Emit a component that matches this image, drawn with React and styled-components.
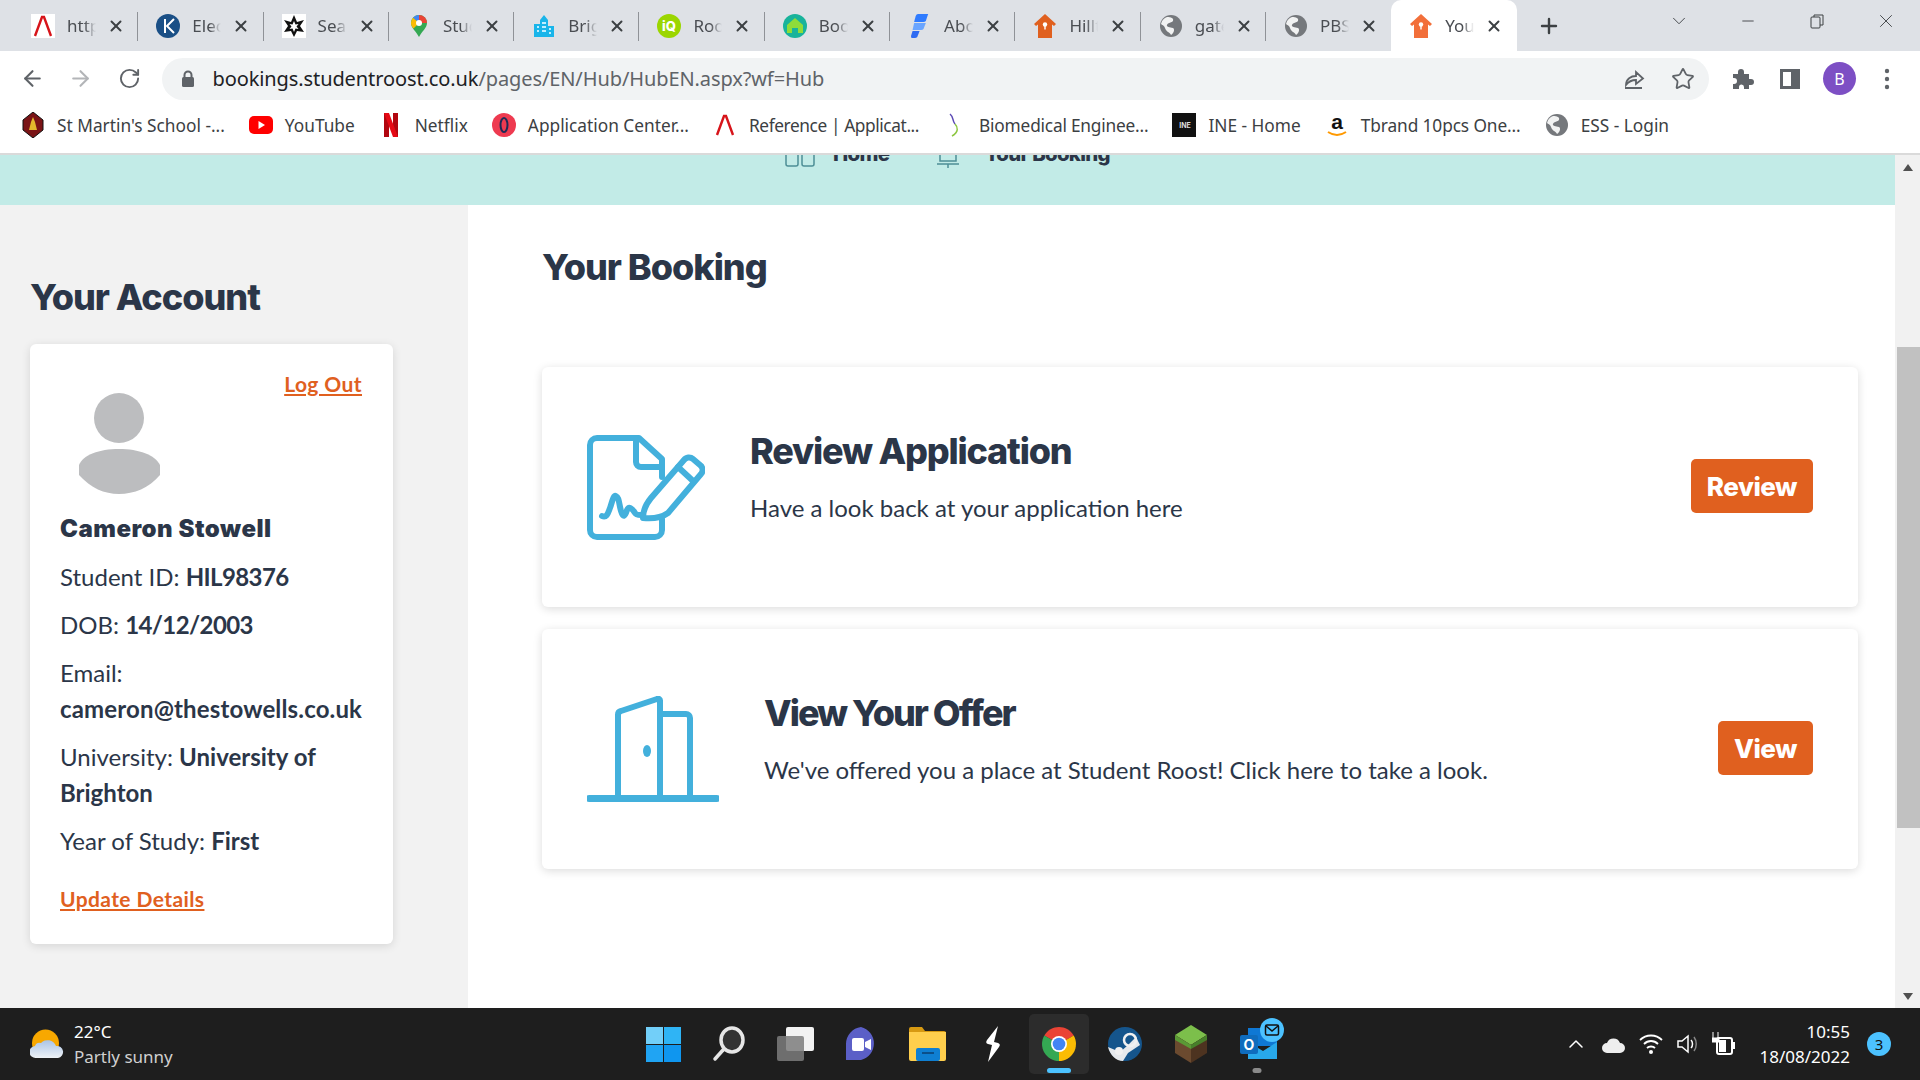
import React from "react";
import styled, { createGlobalStyle } from "styled-components";
import { ArrowLeft, ArrowRight, RotateCw, Star, X, Plus, ChevronDown, Minus, ChevronUp } from "lucide-react";

const GlobalStyle = createGlobalStyle`
  html, body { margin: 0; padding: 0; }
  body { width: 1920px; height: 1080px; overflow: hidden; background: #fff; }
  * { box-sizing: border-box; }
`;

const DARK = "#2b3648";
const ORANGE = "#e0601f";
const BLUE = "#43b0dc";
const UI_FONT = `"Noto Sans", "Open Sans", sans-serif`;
const HEAD_FONT = `Inter, "Liberation Sans", sans-serif`;
const BODY_FONT = `Lato, "Open Sans", sans-serif`;

const Shell = styled.div`
  width: 1920px;
  height: 1080px;
  display: flex;
  flex-direction: column;
  overflow: hidden;
`;

/* ---- tabs ---- */
const TabStrip = styled.div`
  height: 51px;
  background: #dee1e6;
  display: flex;
  align-items: stretch;
  padding-left: 13px;
  flex: none;
`;

const Tab = styled.div`
  width: 125.3px;
  flex: none;
  display: flex;
  align-items: center;
  padding-left: 18px;
  gap: 12px;
  position: relative;
  color: #45494f;
  background: ${(p) => (p.$active ? "#fff" : "transparent")};
  border-radius: ${(p) => (p.$active ? "10px 10px 0 0" : "0")};
  &::after {
    content: "";
    display: ${(p) => (p.$divider ? "block" : "none")};
    position: absolute;
    right: 0;
    top: 12px;
    bottom: 10px;
    width: 1px;
    background: #8f9297;
  }
`;

const TabLabel = styled.span`
  width: 29px;
  overflow: hidden;
  white-space: nowrap;
  font: 400 17px ${UI_FONT};
  color: #4a4d52;
  -webkit-mask-image: linear-gradient(90deg, #000 60%, transparent);
  mask-image: linear-gradient(90deg, #000 60%, transparent);
`;

const TabClose = styled.span`
  display: flex;
  margin-left: -1px;
  color: #3c4043;
`;

const NewTab = styled.div`
  width: 64px;
  display: flex;
  align-items: center;
  justify-content: center;
  color: #3c4043;
`;

const WindowButtons = styled.div`
  margin-left: auto;
  display: flex;
  align-items: flex-start;
  color: #3c4043;
`;

const WindowButton = styled.div`
  width: 69px;
  height: 42px;
  display: flex;
  align-items: center;
  justify-content: center;
`;

/* ---- toolbar ---- */
const Toolbar = styled.div`
  height: 49px;
  flex: none;
  display: flex;
  align-items: center;
  background: #fff;
  padding-top: 6px;
  padding-left: 8px;
  color: #5f6368;
`;

const NavIcon = styled.div`
  width: 48.5px;
  display: flex;
  justify-content: center;
  color: ${(p) => (p.$off ? "#b3b5b8" : "#5f6368")};
`;

const Omnibox = styled.div`
  width: 1547px;
  height: 42px;
  margin-left: 8px;
  border-radius: 21px;
  background: #f1f3f4;
  display: flex;
  align-items: center;
  padding: 0 14px 0 19px;
  font: 400 20px ${UI_FONT};
`;

const Url = styled.div`
  margin-left: 18px;
  color: #5f6368;
  white-space: nowrap;
  letter-spacing: -0.1px;
  span { color: #202124; }
`;

const OmniActions = styled.div`
  margin-left: auto;
  display: flex;
  gap: 25px;
  align-items: center;
`;

const ToolActions = styled.div`
  display: flex;
  align-items: center;
  gap: 25px;
  margin-left: 21px;
`;

const Avatar = styled.div`
  width: 33px;
  height: 33px;
  border-radius: 50%;
  background: #7d4fc4;
  color: #fff;
  font: 400 16px ${UI_FONT};
  display: flex;
  align-items: center;
  justify-content: center;
  margin: 0 2.5px 0 -2.5px;
`;

/* ---- bookmarks ---- */
const Bookmarks = styled.div`
  height: 55px;
  flex: none;
  display: flex;
  align-items: center;
  padding: 0 0 3px 21px;
  gap: 24px;
  background: #fff;
  border-bottom: 2px solid #dadada;
`;

const Bookmark = styled.div`
  display: flex;
  align-items: center;
  gap: 12px;
  font: 400 17.3px ${UI_FONT};
  letter-spacing: ${(p) => p.$spacing || 0}px;
  color: #3c4043;
  white-space: nowrap;
`;

/* ---- page ---- */
const Viewport = styled.div`
  flex: 1;
  min-height: 0;
  display: flex;
`;

const Page = styled.div`
  flex: 1;
  display: flex;
  flex-direction: column;
  background: #fff;
`;

const NavBand = styled.div`
  height: 50px;
  flex: none;
  background: #c2ebe7;
  overflow: hidden;
  display: flex;
  align-items: flex-start;
  padding-left: 785px;
  color: ${DARK};
`;

const NavItem = styled.div`
  display: flex;
  align-items: flex-start;
  gap: ${(p) => p.$iconGap}px;
  margin-right: 48px;
  white-space: nowrap;
  svg { flex: none; }
`;

const NavText = styled.span`
  margin-top: -11px;
  font: 800 20.4px/20px ${HEAD_FONT};
  letter-spacing: -0.7px;
`;

const Columns = styled.div`
  flex: 1;
  display: flex;
  min-height: 0;
`;

const Sidebar = styled.aside`
  width: 468px;
  flex: none;
  background: #f2f2f2;
  padding: 70px 0 0 30px;
`;

const SectionTitle = styled.h2`
  margin: 0;
  font: 800 36px/44px ${HEAD_FONT};
  letter-spacing: -1px;
  color: ${DARK};
`;

const AccountCard = styled.div`
  width: 363px;
  height: 600px;
  margin-top: 25px;
  background: #fff;
  border-radius: 6px;
  box-shadow: 0 2px 10px rgba(0, 0, 0, 0.12);
  padding: 28px 31px 0 30px;
`;

const CardHead = styled.div`
  height: 121px;
  display: flex;
  justify-content: space-between;
  padding-left: 19px;
`;

const OrangeLink = styled.a`
  font: 700 21px/24px ${BODY_FONT};
  letter-spacing: 0.4px;
  color: ${ORANGE};
  text-decoration: underline;
`;

const Name = styled.div`
  margin: 18px 0 12px;
  font: 900 24px/36px ${HEAD_FONT};
  letter-spacing: 0.5px;
  color: ${DARK};
`;

const Info = styled.p`
  margin: 0 0 12px;
  font: 400 24px/36px ${BODY_FONT};
  color: ${DARK};
`;

const Value = styled.b`
  font-weight: 700;
  letter-spacing: ${(p) => p.$spacing || 0}px;
`;

const UpdateRow = styled.div`
  margin-top: 28px;
`;

const Main = styled.main`
  flex: 1;
  padding: 40px 37px 0 74px;
`;

const ActionCard = styled.section`
  height: 240px;
  margin-top: ${(p) => p.$top}px;
  background: #fff;
  border-radius: 6px;
  box-shadow: 0 2px 10px rgba(0, 0, 0, 0.14);
  display: flex;
  align-items: center;
  padding: 0 45px;
`;

const CardText = styled.div`
  margin: 0 0 19px 45px;
`;

const CardTitle = styled.h3`
  margin: 0 0 17px;
  font: 800 36px/44px ${HEAD_FONT};
  letter-spacing: ${(p) => (p.$tight ? "-2px" : "-1.2px")};
  color: ${DARK};
`;

const CardCopy = styled.p`
  margin: 0;
  font: 400 24px/36px ${BODY_FONT};
  color: ${DARK};
`;

const ActionButton = styled.button`
  margin: 0 0 2px auto;
  height: 54px;
  padding: 0 16px;
  border: 0;
  border-radius: 5px;
  background: ${ORANGE};
  color: #fff;
  font: 800 26px ${HEAD_FONT};
  letter-spacing: -0.5px;
`;

const ScrollTrack = styled.div`
  width: 25px;
  flex: none;
  background: #f1f1f1;
  display: flex;
  flex-direction: column;
  align-items: center;
  justify-content: space-between;
  padding: 9px 0 8px;
  position: relative;
`;

const ScrollThumb = styled.div`
  position: absolute;
  left: 2px;
  right: 0;
  top: 192px;
  height: 481px;
  background: #c1c1c1;
`;

const ScrollArrow = styled.div`
  width: 0;
  height: 0;
  border-left: 5px solid transparent;
  border-right: 5px solid transparent;
  ${(p) => (p.$up ? "border-bottom: 7px solid #505050;" : "border-top: 7px solid #505050;")}
`;

/* ---- taskbar ---- */
const Taskbar = styled.footer`
  height: 72px;
  flex: none;
  background: #1e1e1e;
  display: flex;
  align-items: center;
  color: #fff;
  font: 400 17px ${UI_FONT};
  padding-left: 30px;
`;

const Weather = styled.div`
  width: 600px;
  display: flex;
  align-items: center;
  gap: 10px;
`;

const WeatherText = styled.div`
  line-height: 25px;
  div + div { color: #d0d0d0; }
`;

const TaskIcons = styled.div`
  display: flex;
  align-items: center;
`;

const TaskIcon = styled.div`
  width: 60px;
  height: 60px;
  margin: 0 3px;
  display: flex;
  align-items: center;
  justify-content: center;
  position: relative;
  border-radius: 5px;
  background: ${(p) => (p.$active ? "#2c2c2c" : "transparent")};
  &::after {
    content: "";
    display: ${(p) => (p.$indicator ? "block" : "none")};
    position: absolute;
    bottom: 1px;
    left: 50%;
    transform: translateX(-50%);
    width: ${(p) => (p.$indicator === "bar" ? "24px" : "9px")};
    height: 5px;
    border-radius: 3px;
    background: ${(p) => (p.$indicator === "bar" ? "#4cc2ff" : "#8a8a8a")};
  }
`;

const Tray = styled.div`
  margin-left: auto;
  display: flex;
  align-items: center;
  padding-right: 29px;
`;

const TrayIcons = styled.div`
  display: flex;
  align-items: center;
  gap: 12px;
`;

const Clock = styled.div`
  margin-left: 24px;
  text-align: right;
  line-height: 25px;
  font-size: 17px;
`;

const Badge = styled.div`
  width: 24px;
  height: 24px;
  margin-left: 17px;
  border-radius: 50%;
  background: #4cc2ff;
  color: #111;
  font-size: 15px;
  display: flex;
  align-items: center;
  justify-content: center;
`;

/* ---- favicons ---- */
const Chevron = () => (
  <svg width="24" height="24" viewBox="0 0 24 24">
    <rect width="24" height="24" fill="#fff" />
    <path d="M4 22 L11 3 H13 L20 22" fill="none" stroke="#d7141a" strokeWidth="2.4" />
  </svg>
);
const KLogo = () => (
  <svg width="24" height="24" viewBox="0 0 24 24">
    <circle cx="12" cy="12" r="12" fill="#1a4f86" />
    <path d="M9 5v14M18 5l-7 7 7 7" fill="none" stroke="#fff" strokeWidth="2" />
  </svg>
);
const StarLogo = () => (
  <svg width="24" height="24" viewBox="0 0 24 24">
    <rect width="24" height="24" fill="#fff" />
    <path d="M12 1l3 7 7-2-4 6 4 6-7-1-3 6-3-6-7 1 4-6-4-6 7 2z" fill="#111" />
    <path d="M12 7l1.5 3.5 3-.5-2 2.500 2 2.500-3-.5L12 18l-1.500-3.500-3 .5 2-2.500-2-2.500 3 .5z" fill="#fff" />
  </svg>
);
const MapsLogo = () => (
  <svg width="24" height="24" viewBox="0 0 24 24">
    <path d="M12 1a8 8 0 0 0-8 8c0 5 5 8 8 14 3-6 8-9 8-14a8 8 0 0 0-8-8z" fill="#34a853" />
    <path d="M12 1a8 8 0 0 0-6 2.700L12 9z" fill="#4285f4" />
    <path d="M12 1a8 8 0 0 1 8 8l-8 0z" fill="#ea4335" />
    <path d="M4 9c0 2 1 4 2.500 5.500L12 9 6 3.700A8 8 0 0 0 4 9z" fill="#fbbc04" />
    <circle cx="12" cy="9" r="3" fill="#fff" />
  </svg>
);
const BuildingLogo = () => (
  <svg width="24" height="24" viewBox="0 0 24 24">
    <path d="M2 10h6V6l4-5 4 5v6h6v11H2z" fill="#19b5ea" />
    <path d="M5 13h2M5 17h2M10 9h4M10 13h4M10 17h4M17 15h2M17 19h2" stroke="#bfeeff" strokeWidth="2" />
  </svg>
);
const IqLogo = () => (
  <svg width="24" height="24" viewBox="0 0 24 24">
    <circle cx="12" cy="12" r="12" fill="#9bd600" />
    <text x="12" y="17" textAnchor="middle" fontFamily="Inter" fontWeight="800" fontSize="13" fill="#fff">iQ</text>
  </svg>
);
const RoofLogo = () => (
  <svg width="24" height="24" viewBox="0 0 24 24">
    <circle cx="12" cy="12" r="12" fill="#19b39b" />
    <path d="M12 4l8 7v8h-5v-5H9v5H4v-8z" fill="#8fdc3a" />
  </svg>
);
const BoltLogo = () => (
  <svg width="24" height="26" viewBox="0 0 24 26">
    <g transform="translate(3 0) scale(0.78 1)">
      <path d="M6 3 Q7 1 9 1 H22 L19 8 Q18 9 16 9 H4z" fill="#2f7bff" />
      <path d="M4 10 H19 L16 16 Q15 17 13 17 H2z" fill="#6aa5ff" />
      <path d="M2 18 H11 L8 24 Q7 25 5 25 H1 Q0 25 0 23z" fill="#2f6bf2" />
    </g>
  </svg>
);
const HouseLogo = ({ fill = "#e0601f" }) => (
  <svg width="24" height="24" viewBox="0 0 24 24">
    <path d="M12 0 L23 10 L21 12 L19 10.500 V24 H5 V10.500 L3 12 L1 10z" fill={fill} />
    <circle cx="12" cy="10.500" r="2.200" fill="#fff" />
    <rect x="11.300" y="12" width="1.400" height="3.500" fill="#fff" />
  </svg>
);
const Globe = ({ fill = "#75787c" }) => (
  <svg width="24" height="24" viewBox="0 0 24 24">
    <circle cx="12" cy="12" r="11" fill={fill} />
    <path d="M8 3c4 0 7 1 6 4-1 2-5 1-6 4-1 2 3 2 6 3 2 1 1 5-2 7-1-3-5-3-6-7-1-3-3-3-4-4 1-4 3-6 6-7z" fill="#fff" opacity="0.9" />
  </svg>
);
const Crest = () => (
  <svg width="24" height="26" viewBox="-1 0 24 26">
    <path d="M11 0l10 8v10l-10 8-10-8V8z" fill="#7a1416" stroke="#111" />
    <path d="M11 5l2 5 2 8h-8l2-8z" fill="#e3b82c" />
  </svg>
);
const YouTubeIcon = () => (
  <svg width="24" height="18" viewBox="0 0 24 18">
    <rect width="24" height="18" rx="5" fill="#f00" />
    <path d="M9.500 5l6.500 4-6.500 4z" fill="#fff" />
  </svg>
);
const NetflixIcon = () => (
  <svg width="24" height="24" viewBox="-5 0 24 24">
    <path d="M0 0h5v24H0z" fill="#b1060f" />
    <path d="M9 0h5v24H9z" fill="#b1060f" />
    <path d="M0 0h5l9 24H9z" fill="#e50914" />
  </svg>
);
const AppCenterIcon = () => (
  <svg width="24" height="24" viewBox="0 0 24 24">
    <circle cx="12" cy="12" r="12" fill="#ee3a50" />
    <ellipse cx="12" cy="12" rx="3.500" ry="7" fill="none" stroke="#1f2a55" strokeWidth="2" />
  </svg>
);
const BraceIcon = () => (
  <svg width="24" height="24" viewBox="-5 0 24 24">
    <path d="M2 1c4 3 2 7 5 10" fill="none" stroke="#5b49b5" strokeWidth="1.500" />
    <path d="M7 11c3 3 4 8-3 12" fill="none" stroke="#8cc63f" strokeWidth="1.500" />
  </svg>
);
const IneIcon = () => (
  <svg width="24" height="24" viewBox="0 0 24 24">
    <rect width="24" height="24" fill="#111" />
    <text x="13" y="15" textAnchor="middle" fontFamily="Inter" fontWeight="700" fontSize="7" fill="#ddd">INE</text>
  </svg>
);
const AmazonIcon = () => (
  <svg width="24" height="26" viewBox="0 0 24 26">
    <text x="12" y="17" textAnchor="middle" fontFamily="Liberation Sans" fontWeight="700" fontSize="21" fill="#111">a</text>
    <path d="M3 20c6 4 12 4 18 0" fill="none" stroke="#f90" strokeWidth="2" />
  </svg>
);

/* ---- browser glyphs ---- */
const LockIcon = () => (
  <svg width="14" height="18" viewBox="0 0 14 18">
    <path d="M3.500 8V5a3.500 3.500 0 0 1 7 0v3" fill="none" stroke="#5f6368" strokeWidth="2" />
    <rect x="1" y="7" width="12" height="10" rx="1.500" fill="#5f6368" />
  </svg>
);
const ShareIcon = () => (
  <svg width="24" height="24" viewBox="0 0 24 24" fill="none" stroke="#5f6368" strokeWidth="1.800">
    <path d="M3 21h17M4 18c0-6 5-9 10-9V5l7 6.500L14 17v-4c-4 0-7 1-10 5z" />
  </svg>
);
const PuzzleIcon = () => (
  <svg width="24" height="24" viewBox="0 0 24 24">
    <path d="M3 7h5V5a3 3 0 0 1 6 0v2h5v5h2a3 3 0 0 1 0 6h-2v4h-5v-2a2.500 2.500 0 0 0-5 0v2H3v-5h1a3 3 0 0 0 0-6H3z" fill="#5f6368" />
  </svg>
);
const PanelIcon = () => (
  <svg width="22" height="22" viewBox="0 0 22 22">
    <path d="M1 1h20v20H1z M4 4v14h8V4z" fill="#5f6368" fillRule="evenodd" />
  </svg>
);
const DotsIcon = () => (
  <svg width="6" height="22" viewBox="0 0 6 22">
    <circle cx="3" cy="3" r="2.200" fill="#5f6368" />
    <circle cx="3" cy="11" r="2.200" fill="#5f6368" />
    <circle cx="3" cy="19" r="2.200" fill="#5f6368" />
  </svg>
);
const RestoreIcon = () => (
  <svg width="14" height="15" viewBox="0 0 14 15" fill="none" stroke="#3c4043" strokeWidth="1">
    <rect x="1" y="3" width="9" height="11" rx="1" />
    <path d="M4 3V1h9v10h-3" />
  </svg>
);

/* ---- page art ---- */
const ReviewArt = () => (
  <svg width="118" height="105" viewBox="0 0 118 105" fill="none" stroke={BLUE} strokeWidth="6" strokeLinecap="round" strokeLinejoin="round">
    <path d="M75 42 V24 L52 3 H10 a7 7 0 0 0 -7 7 V95 a7 7 0 0 0 7 7 H68 a7 7 0 0 0 7 -7 V84" />
    <path d="M49 3 V27 a5 5 0 0 0 5 5 H75" />
    <path d="M15 81 c5 2 6 -3 8 -8 s3 -13 6 -12 s3 8 5 15 s4 6 6 -1 c2 -4 5 -2 8 3 c1 2 3 2 6 2" />
    <path d="M56 83 c0 -8 3 -14 8 -20 L97 25 a6 6 0 0 1 9 -1 l7 6 a6 6 0 0 1 1 9 L81 78 c-7 5 -15 6 -25 5 z" />
    <path d="M91 32 l14 13" />
  </svg>
);
const OfferArt = () => (
  <svg width="132" height="106" viewBox="0 0 132 106" fill="none" stroke={BLUE} strokeWidth="6" strokeLinejoin="round">
    <path d="M31 102 V19 a4 4 0 0 1 3 -4 L70 3 a2 2 0 0 1 3 2 V102" />
    <path d="M73 18 H99 a4 4 0 0 1 4 4 V102" />
    <path d="M2 102.500 H130" strokeWidth="7" strokeLinecap="round" />
    <ellipse cx="60" cy="55" rx="4" ry="6" fill={BLUE} stroke="none" />
  </svg>
);
const PersonArt = () => (
  <svg width="81" height="122" viewBox="0 -21 81 122">
    <ellipse cx="40" cy="25" rx="25" ry="25" fill="#bcbdbf" />
    <path d="M0 72 C4 62 20 56 40 56 S76 62 81 72 V82 C70 95 55 101 40 101 S12 95 0 82z" fill="#bcbdbf" />
  </svg>
);
const HomeGlyph = () => (
  <svg width="30" height="12" viewBox="0 0 30 12" fill="none" stroke="#4e8f97" strokeWidth="1.500">
    <rect x="1" y="-8" width="12" height="19" rx="2" />
    <rect x="17" y="-8" width="12" height="19" rx="2" />
  </svg>
);
const BookingGlyph = () => (
  <svg width="22" height="13" viewBox="0 0 22 13" fill="none" stroke="#4e8f97" strokeWidth="1.500">
    <path d="M3 -4 V6 H19 V-4 M0 9 H22 M11 9 V13" />
  </svg>
);

/* ---- taskbar art ---- */
const WeatherArt = () => (
  <svg width="34" height="32" viewBox="0 0 34 32">
    <defs>
      <linearGradient id="cloudFill" x1="0" y1="0" x2="0" y2="1">
        <stop offset="0" stopColor="#aac4e6" />
        <stop offset="1" stopColor="#eef2f6" />
      </linearGradient>
    </defs>
    <circle cx="15.500" cy="15" r="13.500" fill="#f8a800" />
    <path d="M6 30 a6 6 0 0 1 -1 -12 a5 5 0 0 1 6 -3 a9 9 0 0 1 15 3 a6 6 0 0 1 2 12z" fill="url(#cloudFill)" />
  </svg>
);
const WinLogo = () => (
  <svg width="35" height="35" viewBox="0 0 35 35">
    <rect width="17" height="17" x="0" y="0" fill="#72cff9" />
    <rect width="17" height="17" x="18" y="0" fill="#2fb4f5" />
    <rect width="17" height="17" x="0" y="18" fill="#20a4f3" />
    <rect width="17" height="17" x="18" y="18" fill="#0f96ef" />
  </svg>
);
const SearchArt = () => (
  <svg width="34" height="36" viewBox="0 0 34 36" fill="none" stroke="#e6e6e6" strokeWidth="3.500" strokeLinecap="round">
    <ellipse cx="20" cy="14" rx="11" ry="12" fill="#333" />
    <path d="M11 24 L3 33" />
  </svg>
);
const TaskViewArt = () => (
  <svg width="37" height="34" viewBox="0 0 37 34">
    <rect x="9" y="0" width="28" height="24" rx="2" fill="#f2f2f2" />
    <rect x="0" y="9" width="27" height="25" rx="2" fill="#7d7d7d" opacity="0.85" />
  </svg>
);
const MeetArt = () => (
  <svg width="34" height="35" viewBox="0 0 34 35">
    <path d="M17 0a17 17 0 0 1 0 33H2v-16A17 17 0 0 1 17 0z" fill="#5b5fc7" />
    <rect x="8" y="11" width="12" height="13" rx="2" fill="#fff" />
    <path d="M21 15l6-3v11l-6-3z" fill="#fff" />
  </svg>
);
const FolderArt = () => (
  <svg width="37" height="34" viewBox="0 0 37 34">
    <path d="M0 2a2 2 0 0 1 2-2h11l3 4h19a2 2 0 0 1 2 2v6H0z" fill="#d79a12" />
    <path d="M0 5h37v27a2 2 0 0 1-2 2H2a2 2 0 0 1-2-2z" fill="#ffcf4d" />
    <rect x="7" y="21" width="24" height="13" rx="2" fill="#0f7fd2" />
    <rect x="13" y="25" width="12" height="2" fill="#0b4f8a" />
  </svg>
);
const BoltArt = () => (
  <svg width="18" height="36" viewBox="0 0 18 36">
    <path d="M14 0 L3 14 Q1 17 4 18 L8 19 L4 36 L15 21 Q17 18 14 17 L10 16z" fill="#fff" />
  </svg>
);
const ChromeArt = () => (
  <svg width="34" height="34" viewBox="0 0 34 34">
    <path d="M17 17 L2.300 8.500 A17 17 0 0 1 31.700 8.500z" fill="#ea4335" />
    <path d="M17 17 L31.700 8.500 A17 17 0 0 1 17 34z" fill="#fbbc04" />
    <path d="M17 17 L17 34 A17 17 0 0 1 2.300 8.500z" fill="#34a853" />
    <circle cx="17" cy="17" r="8" fill="#fff" />
    <circle cx="17" cy="17" r="6.300" fill="#4285f4" />
  </svg>
);
const SteamArt = () => (
  <svg width="34" height="34" viewBox="0 0 34 34">
    <circle cx="17" cy="17" r="17" fill="#15558c" />
    <path d="M0 20l12 5 7-6 9-9 4 8-12 8-5 8C8 34 2 28 0 20z" fill="#f1f1f1" opacity="0.95" />
    <circle cx="22" cy="13" r="6" fill="none" stroke="#f1f1f1" strokeWidth="2.500" />
    <circle cx="11" cy="24" r="4" fill="#f1f1f1" />
  </svg>
);
const MinecraftArt = () => (
  <svg width="32" height="38" viewBox="0 0 32 38">
    <path d="M16 0 L32 10 L16 20 L0 10z" fill="#7cbf4b" />
    <path d="M0 10 L16 20 V38 L0 28z" fill="#6b4a2f" />
    <path d="M32 10 L16 20 V38 L32 28z" fill="#4d3320" />
    <path d="M0 10 L16 20 V24 L0 15z" fill="#5a9a35" />
    <path d="M32 10 L16 20 V24 L32 15z" fill="#47802a" />
  </svg>
);
const OutlookArt = () => (
  <svg width="60" height="60" viewBox="0 0 60 60">
    <rect x="21" y="14" width="29" height="18" fill="#0f78d4" />
    <path d="M21 28 L36 37 L50 28 V45 H21z" fill="#28a8ea" />
    <rect x="13" y="21" width="18" height="19" rx="2" fill="#0f6cbd" />
    <text x="22" y="36" textAnchor="middle" fontFamily="Inter" fontWeight="700" fontSize="14" fill="#fff">O</text>
    <circle cx="45" cy="16" r="12" fill="#4cc2ff" />
    <rect x="38.500" y="11" width="13" height="10" rx="1.500" fill="none" stroke="#111" strokeWidth="1.500" />
    <path d="M39 12 L45 17 L51 12" fill="none" stroke="#111" strokeWidth="1.500" />
  </svg>
);
const CloudTray = () => (
  <svg width="26" height="20" viewBox="0 0 26 20">
    <path d="M7 19a5 5 0 0 1 0-10 7 7 0 0 1 13 0 5 5 0 0 1 0 10z" fill="#eee" />
  </svg>
);
const WifiTray = () => (
  <svg width="26" height="24" viewBox="0 0 26 24" fill="none" stroke="#fff" strokeWidth="1.800">
    <path d="M2 8c6-6 16-6 22 0M6 12c4-4 10-4 14 0M9 16c2-2 6-2 8 0" />
    <circle cx="13" cy="20" r="2" fill="#fff" stroke="none" />
  </svg>
);
const SpeakerTray = () => (
  <svg width="24" height="24" viewBox="0 0 24 24" fill="none" stroke="#fff" strokeWidth="1.500">
    <path d="M2 9h4l6-5v16l-6-5H2z" />
    <path d="M15 8c2 2 2 6 0 8" />
    <path d="M18 5c3 4 3 10 0 14" stroke="#888" />
  </svg>
);
const BatteryTray = () => (
  <svg width="24" height="26" viewBox="0 0 24 26" fill="#fff">
    <rect x="5" y="7" width="15" height="16" rx="2" fill="none" stroke="#fff" strokeWidth="2" />
    <rect x="7" y="9" width="7" height="12" />
    <rect x="20" y="11" width="3" height="7" />
    <path d="M1 1v6M6 1v6M0 7h7v4H0z" stroke="#fff" />
  </svg>
);

const TABS = [
  { Icon: Chevron, label: "https" },
  { Icon: KLogo, label: "Electr" },
  { Icon: StarLogo, label: "Search" },
  { Icon: MapsLogo, label: "Stude" },
  { Icon: BuildingLogo, label: "Bright" },
  { Icon: IqLogo, label: "Room" },
  { Icon: RoofLogo, label: "Book" },
  { Icon: BoltLogo, label: "Abou" },
  { Icon: HouseLogo, label: "Hillto" },
  { Icon: Globe, label: "gatev" },
  { Icon: Globe, label: "PBS" },
];

const BOOKMARKS = [
  { Icon: Crest, label: "St Martin's School -..." },
  { Icon: YouTubeIcon, label: "YouTube" },
  { Icon: NetflixIcon, label: "Netflix" },
  { Icon: AppCenterIcon, label: "Application Center..." },
  { Icon: Chevron, label: "Reference | Applicat...", spacing: -0.4 },
  { Icon: BraceIcon, label: "Biomedical Enginee...", spacing: -0.2 },
  { Icon: IneIcon, label: "INE - Home" },
  { Icon: AmazonIcon, label: "Tbrand 10pcs One...", spacing: -0.1 },
  { Icon: Globe, label: "ESS - Login" },
];

export default function App() {
  return (
    <Shell>
      <GlobalStyle />
      <TabStrip>
        {TABS.map(({ Icon, label }, i) => (
          <Tab key={i} $divider={i < TABS.length - 1}>
            <Icon />
            <TabLabel>{label}</TabLabel>
            <TabClose><X size={18} strokeWidth={2.6} /></TabClose>
          </Tab>
        ))}
        <Tab $active>
          <HouseLogo fill="#f26f3a" />
          <TabLabel>Your</TabLabel>
          <TabClose><X size={18} strokeWidth={2.6} /></TabClose>
        </Tab>
        <NewTab><Plus size={24} strokeWidth={2.4} /></NewTab>
        <WindowButtons>
          <WindowButton><ChevronDown size={22} strokeWidth={1} /></WindowButton>
          <WindowButton><Minus size={18} strokeWidth={1.2} /></WindowButton>
          <WindowButton><RestoreIcon /></WindowButton>
          <WindowButton><X size={22} strokeWidth={1} /></WindowButton>
        </WindowButtons>
      </TabStrip>

      <Toolbar>
        <NavIcon><ArrowLeft size={25} strokeWidth={2} /></NavIcon>
        <NavIcon $off><ArrowRight size={25} strokeWidth={2} /></NavIcon>
        <NavIcon><RotateCw size={23} strokeWidth={2} /></NavIcon>
        <Omnibox>
          <LockIcon />
          <Url><span>bookings.studentroost.co.uk</span>/pages/EN/Hub/HubEN.aspx?wf=Hub</Url>
          <OmniActions>
            <ShareIcon />
            <Star size={24} strokeWidth={1.8} />
          </OmniActions>
        </Omnibox>
        <ToolActions>
          <PuzzleIcon />
          <PanelIcon />
          <Avatar>B</Avatar>
          <DotsIcon />
        </ToolActions>
      </Toolbar>

      <Bookmarks>
        {BOOKMARKS.map(({ Icon, label, spacing }) => (
          <Bookmark key={label} $spacing={spacing}>
            <Icon />
            {label}
          </Bookmark>
        ))}
      </Bookmarks>

      <Viewport>
        <Page>
          <NavBand>
            <NavItem $iconGap={18}><HomeGlyph /><NavText>Home</NavText></NavItem>
            <NavItem $iconGap={25}><BookingGlyph /><NavText>Your Booking</NavText></NavItem>
          </NavBand>
          <Columns>
            <Sidebar>
              <SectionTitle>Your Account</SectionTitle>
              <AccountCard>
                <CardHead>
                  <PersonArt />
                  <OrangeLink href="#">Log Out</OrangeLink>
                </CardHead>
                <Name>Cameron Stowell</Name>
                <Info>Student ID: <Value $spacing={-0.6}>HIL98376</Value></Info>
                <Info>DOB: <Value $spacing={-0.6}>14/12/2003</Value></Info>
                <Info>Email: <Value $spacing={0.15}>cameron@thestowells.co.uk</Value></Info>
                <Info>University: <Value>University of Brighton</Value></Info>
                <Info>Year of Study: <Value>First</Value></Info>
                <UpdateRow><OrangeLink href="#">Update Details</OrangeLink></UpdateRow>
              </AccountCard>
            </Sidebar>
            <Main>
              <SectionTitle>Your Booking</SectionTitle>
              <ActionCard $top={78}>
                <ReviewArt />
                <CardText>
                  <CardTitle>Review Application</CardTitle>
                  <CardCopy>Have a look back at your application here</CardCopy>
                </CardText>
                <ActionButton>Review</ActionButton>
              </ActionCard>
              <ActionCard $top={22}>
                <OfferArt />
                <CardText>
                  <CardTitle $tight>View Your Offer</CardTitle>
                  <CardCopy>We've offered you a place at Student Roost! Click here to take a look.</CardCopy>
                </CardText>
                <ActionButton>View</ActionButton>
              </ActionCard>
            </Main>
          </Columns>
        </Page>
        <ScrollTrack>
          <ScrollArrow $up />
          <ScrollThumb />
          <ScrollArrow />
        </ScrollTrack>
      </Viewport>

      <Taskbar>
        <Weather>
          <WeatherArt />
          <WeatherText>
            <div>22°C</div>
            <div>Partly sunny</div>
          </WeatherText>
        </Weather>
        <TaskIcons>
          <TaskIcon><WinLogo /></TaskIcon>
          <TaskIcon><SearchArt /></TaskIcon>
          <TaskIcon><TaskViewArt /></TaskIcon>
          <TaskIcon><MeetArt /></TaskIcon>
          <TaskIcon><FolderArt /></TaskIcon>
          <TaskIcon><BoltArt /></TaskIcon>
          <TaskIcon $active $indicator="bar"><ChromeArt /></TaskIcon>
          <TaskIcon><SteamArt /></TaskIcon>
          <TaskIcon><MinecraftArt /></TaskIcon>
          <TaskIcon $indicator="dot"><OutlookArt /></TaskIcon>
        </TaskIcons>
        <Tray>
          <TrayIcons>
            <ChevronUp size={24} strokeWidth={1.5} />
            <CloudTray />
            <WifiTray />
            <SpeakerTray />
            <BatteryTray />
          </TrayIcons>
          <Clock>
            <div>10:55</div>
            <div>18/08/2022</div>
          </Clock>
          <Badge>3</Badge>
        </Tray>
      </Taskbar>
    </Shell>
  );
}
